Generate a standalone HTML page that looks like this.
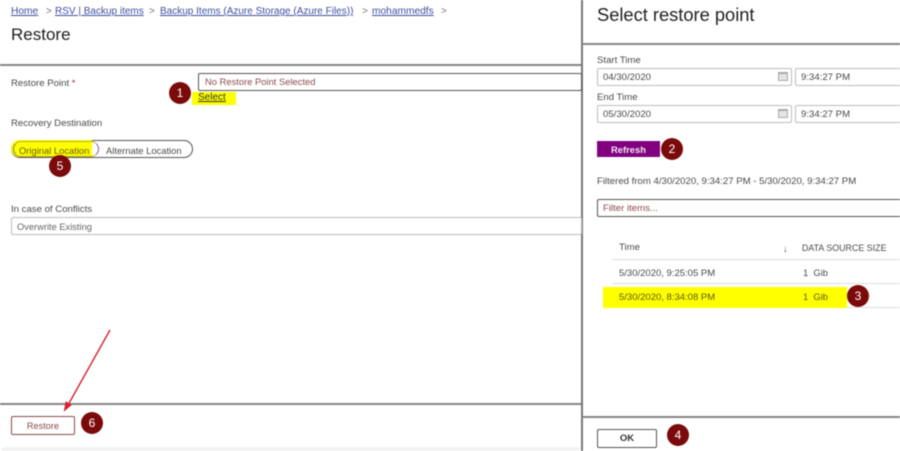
<!DOCTYPE html>
<html><head><meta charset="utf-8">
<style>
html,body{margin:0;padding:0;background:#fff}
#p{position:relative;width:900px;height:451px;overflow:hidden;background:#fff;font-family:"Liberation Sans",sans-serif;font-size:9.600px;color:#4a4a4a;filter:blur(.4px)}
#p div,#p a{position:absolute;box-sizing:border-box;white-space:nowrap}
.t{line-height:12px;margin-top:2px}
a{color:#3f4f9f;text-decoration:underline}
.b{width:22px;height:22px;border-radius:50%;background:#7b0a0a;color:#fff;font-size:12px;line-height:22px;text-align:center}
.l{background:#858585;height:2px}
.i{border:1px solid #bdbdbd;border-radius:2px;height:18px;background:#fff}
.s{background:#ddd;height:1px}
.cal{width:10px;height:9px;border:1px solid #aaa;background:#e4e4e4;border-top-width:2px}
</style></head><body>
<div id="p">
<a class="t" style="left:11px;top:4px;font-size:10.200px">Home</a>
<div class="t" style="left:46px;top:4px;color:#777;font-size:10px">&gt;</div>
<a class="t" style="left:55px;top:4px;font-size:10px">RSV | Backup items</a>
<div class="t" style="left:149px;top:4px;color:#777;font-size:10px">&gt;</div>
<a class="t" style="left:160px;top:4px;font-size:10px">Backup Items (Azure Storage (Azure Files))</a>
<div class="t" style="left:362px;top:4px;color:#777;font-size:10px">&gt;</div>
<a class="t" style="left:372px;top:4px;font-size:10.200px">mohammedfs</a>
<div class="t" style="left:441px;top:4px;color:#777;font-size:10px">&gt;</div>
<div style="left:11px;top:24px;font-size:17px;line-height:22px;color:#222">Restore</div>
<div class="l" style="left:0;top:64px;width:581px"></div>
<div style="left:581px;top:0;width:2px;height:451px;background:#777"></div>

<div class="t" style="left:11px;top:76px">Restore Point <span style="color:#a33">*</span></div>
<div class="i" style="left:198px;top:73px;width:384px;border-color:#555"></div>
<div class="t" style="left:205px;top:74px;color:#8b4a4a;font-size:9.400px">No Restore Point Selected</div>
<div style="left:192px;top:92px;width:44px;height:13px;background:#ff0"></div>
<a class="t" style="left:198px;top:90px;color:#333;font-size:10px">Select</a>
<div class="b" style="left:169px;top:82px">1</div>

<div class="t" style="left:11px;top:116px">Recovery Destination</div>
<div style="left:11px;top:140px;width:182px;height:18px;border:1px solid #555;border-radius:9px"></div>
<div style="left:11px;top:140px;width:81px;height:17px;background:#ff0;border-radius:9px 0 0 9px"></div>
<div style="left:13px;top:141px;width:86px;height:16px;border:1px solid #8a5a9a;border-radius:8px;border-left-color:#777;border-top-color:#bbb020;border-bottom-color:#bbb020"></div>
<div class="t" style="left:19px;top:143px;color:#6a5a10;font-size:9.400px">Original Location</div>
<div class="t" style="left:106px;top:143px;font-size:9.400px">Alternate Location</div>
<div class="b" style="left:49px;top:155px">5</div>

<div class="t" style="left:11px;top:202px">In case of Conflicts</div>
<div class="i" style="left:11px;top:217px;width:571px"></div>
<div class="t" style="left:17px;top:219px;color:#666;font-size:9.300px">Overwrite Existing</div>

<div class="l" style="left:0;top:403px;width:581px"></div>
<div style="left:11px;top:416px;width:64px;height:19px;border:1px solid #8b4a4a;border-radius:2px;text-align:center;line-height:18px;color:#8b4a4a;font-size:9.200px">Restore</div>
<div class="b" style="left:81px;top:412px">6</div>
<div style="left:2px;top:447px;width:578px;height:4px;background:#f3f3f3"></div>
<svg style="position:absolute;left:0;top:0" width="900" height="451"><path d="M110 330L68 405" stroke="#d9202f" stroke-width="1.400" fill="none"/><path d="M64.500 410.500L66 402L71 405Z" fill="#d9202f" stroke="#d9202f"/></svg>

<div style="left:597px;top:3px;font-size:18.300px;line-height:23px;color:#222">Select restore point</div>
<div class="l" style="left:582px;top:43px;width:318px"></div>
<div class="t" style="left:597px;top:53px">Start Time</div>
<div class="i" style="left:597px;top:68px;width:195px"></div>
<div class="t" style="left:603px;top:70px">04/30/2020</div>
<div class="cal" style="left:778px;top:72px"></div>
<div class="i" style="left:795px;top:68px;width:110px"></div>
<div class="t" style="left:801px;top:70px">9:34:27 PM</div>
<div class="t" style="left:597px;top:90px">End Time</div>
<div class="i" style="left:597px;top:105px;width:195px"></div>
<div class="t" style="left:603px;top:107px">05/30/2020</div>
<div class="cal" style="left:778px;top:109px"></div>
<div class="i" style="left:795px;top:105px;width:110px"></div>
<div class="t" style="left:801px;top:107px">9:34:27 PM</div>
<div style="left:597px;top:141px;width:63px;height:16px;background:#800080;color:#f0e6f0;font-weight:bold;text-align:center;line-height:17px;font-size:9.400px">Refresh</div>
<div class="b" style="left:661px;top:138px">2</div>
<div class="t" style="left:597px;top:174px;font-size:9.600px">Filtered from 4/30/2020, 9:34:27 PM - 5/30/2020, 9:34:27 PM</div>
<div class="i" style="left:597px;top:199px;width:310px;border-color:#555"></div>
<div class="t" style="left:603px;top:201px;color:#8b4a4a">Filter items...</div>

<div class="t" style="left:619px;top:240px">Time</div>
<div class="t" style="left:783px;top:242px;color:#666">↓</div>
<div class="t" style="left:802px;top:240px;font-size:8.900px">DATA SOURCE SIZE</div>
<div class="s" style="left:612px;top:259px;width:288px"></div>
<div class="t" style="left:619px;top:266px;font-size:9.500px">5/30/2020, 9:25:05 PM</div>
<div class="t" style="left:803px;top:265px;font-size:9.400px">1&nbsp; Gib</div>
<div class="s" style="left:612px;top:283px;width:288px"></div>
<div style="left:603px;top:287px;width:244px;height:21px;background:#ff0"></div>
<div class="t" style="left:619px;top:290px;font-size:9.500px;color:#5a5a10">5/30/2020, 8:34:08 PM</div>
<div class="t" style="left:803px;top:289px;color:#5a5a10;font-size:9.400px">1&nbsp; Gib</div>
<div class="s" style="left:847px;top:307px;width:53px"></div>
<div class="b" style="left:847px;top:285px">3</div>

<div class="l" style="left:582px;top:416px;width:318px"></div>
<div style="left:597px;top:429px;width:60px;height:19px;border:1px solid #555;border-radius:2px;text-align:center;line-height:17px;color:#333;font-weight:bold;font-size:9.500px">OK</div>
<div class="b" style="left:667px;top:424px">4</div>
</div>
</body></html>
